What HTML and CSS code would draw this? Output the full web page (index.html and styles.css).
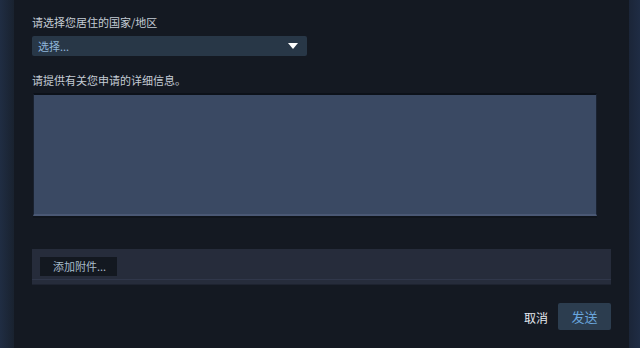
FILE: index.html
```html
<!DOCTYPE html>
<html lang="zh-CN">
<head>
<meta charset="utf-8">
<link rel="stylesheet" href="styles.css">
</head>
<body>
<div class="frame">
  <div class="edge-left"></div>
  <main class="panel">
    <div class="label">请选择您居住的国家/地区</div>
    <div class="select">
      <span class="select-text">选择...</span>
      <svg class="arrow" width="10" height="6" viewBox="0 0 10 6"><polygon points="0,0 10,0 5,6" fill="#ffffff"/></svg>
    </div>
    <div class="label label2">请提供有关您申请的详细信息。</div>
    <div class="textarea"></div>
    <div class="attach">
      <div class="attach-btn">添加附件...</div>
    </div>
    <div class="actions">
      <span class="cancel">取消</span>
      <div class="send">发送</div>
    </div>
  </main>
  <div class="edge-right"></div>
</div>
</body>
</html>
```
FILE: styles.css
```css
html, body {
  margin: 0;
  padding: 0;
  width: 640px;
  height: 348px;
  overflow: hidden;
  background: #141922;
  font-family: "Noto Sans CJK SC", "Noto Sans", sans-serif;
}
.frame {
  display: flex;
  width: 640px;
  height: 348px;
}
.edge-left {
  width: 14px;
  background: linear-gradient(to right, #202d43, #19222f);
}
.edge-right {
  width: 11px;
  background: linear-gradient(to right, #1b2538, #1f2c44);
}
.panel {
  flex: 1;
  background: #141922;
  padding: 15px 18px 0 18px;
  display: flex;
  flex-direction: column;
  align-items: flex-start;
}
.label {
  font-size: 11px;
  line-height: 14px;
  color: #c4ccd5;
}
.label2 {
  margin-top: 17px;
}
.select {
  margin-top: 7px;
  width: 275px;
  height: 20px;
  background: #283747;
  border-radius: 2px;
  display: flex;
  align-items: center;
  justify-content: space-between;
  padding: 0 9px 0 6px;
  box-sizing: border-box;
}
.select-text {
  font-size: 11px;
  color: #8fb6da;
}
.arrow {
  display: block;
}
.textarea {
  margin-top: 6px;
  margin-left: 1px;
  width: 564px;
  height: 123px;
  box-sizing: border-box;
  background: #3a4963;
  border-top: 2px solid #0c1119;
  border-left: 1px solid #1a2230;
  border-right: 1px solid #1a2230;
  border-bottom: 2px solid #4a5874;
  box-shadow: 0 2px 0 #0f141c;
}
.attach {
  margin-top: 33px;
  width: 579px;
  height: 36px;
  box-sizing: border-box;
  background: #262c3b;
  border-bottom: 1px solid #1e2330;
  box-shadow: inset 0 -4px 0 #262c3b, inset 0 -5px 0 #30374a;
  display: flex;
  align-items: center;
  padding: 0 0 0 8px;
}
.attach-btn {
  margin-top: 0px;
  width: 77px;
  height: 19px;
  background: #131820;
  color: #a8bccb;
  font-size: 11px;
  line-height: 19px;
  padding-left: 13px;
  box-sizing: border-box;
}
.actions {
  margin-top: 18px;
  width: 579px;
  display: flex;
  justify-content: flex-end;
  align-items: center;
}
.cancel {
  font-size: 12px;
  color: #e4e8ee;
  margin-right: 10px;
  margin-top: 2px;
}
.send {
  width: 53px;
  height: 27px;
  background: #2c3d4f;
  border-radius: 2px;
  color: #6aa6dd;
  font-size: 13px;
  line-height: 27px;
  text-align: center;
}
```
